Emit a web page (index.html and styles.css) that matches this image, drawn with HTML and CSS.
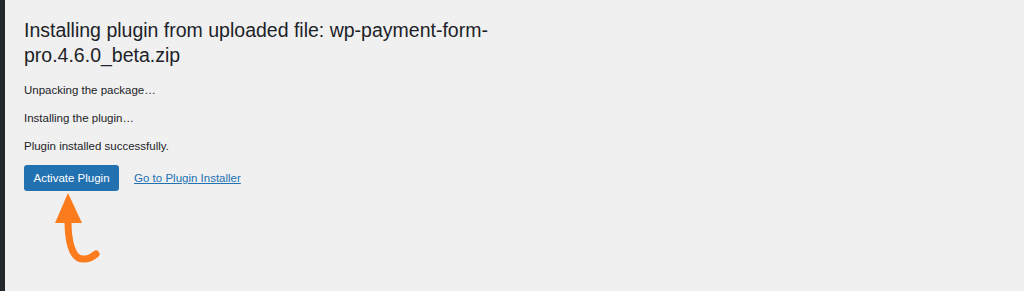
FILE: index.html
```html
<!DOCTYPE html>
<html lang="en">
<head>
<meta charset="utf-8">
<title>Installing Plugin</title>
<link rel="stylesheet" href="styles.css">
</head>
<body>
<div class="page">
  <div class="sidebar-edge"></div>
  <main class="wrap">
    <h1 class="title">Installing plugin from uploaded file: wp-payment-form-pro.4.6.0_beta.zip</h1>
    <p class="step">Unpacking the package…</p>
    <p class="step">Installing the plugin…</p>
    <p class="step">Plugin installed successfully.</p>
    <div class="actions">
      <a class="button-primary" href="#">Activate Plugin</a>
      <a class="link" href="#">Go to Plugin Installer</a>
    </div>
    <svg class="arrow" width="55" height="75" viewBox="0 0 55 75" aria-hidden="true">
      <polygon points="18,1 5,31 32,31" fill="#fc7b1c"/>
      <path d="M18 29 C18 46, 21 66, 32 67 C37 67.5, 42 65.5, 46 62" fill="none" stroke="#fc7b1c" stroke-width="7" stroke-linecap="round"/>
    </svg>
  </main>
</div>
</body>
</html>
```

FILE: styles.css
```css
html, body {
  margin: 0;
  padding: 0;
  background: #f0f0f1;
}
body {
  font-family: "Liberation Sans", Arial, sans-serif;
  color: #1d2327;
}
.page {
  display: flex;
  min-height: 291px;
}
.sidebar-edge {
  width: 5px;
  flex: none;
  background: #23282d;
}
.wrap {
  padding-left: 19px;
  padding-top: 17.5px;
  flex: 1;
}
.title {
  font-size: 19.5px;
  font-weight: 400;
  line-height: 25px;
  margin: 0;
  max-width: 500px;
}
.step {
  font-size: 11.5px;
  line-height: 16px;
  margin: 0 0 12px 0;
  color: #1d2327;
}
.title + .step {
  margin-top: 14.5px;
}
.actions {
  display: flex;
  align-items: center;
  gap: 15px;
  margin-top: -1px;
}
.button-primary {
  display: inline-block;
  background: #2271b1;
  color: #fff;
  font-size: 11.5px;
  line-height: 26px;
  height: 26px;
  padding: 0 9.5px;
  border-radius: 3px;
  text-decoration: none;
}
.link {
  color: #2271b1;
  font-size: 11.5px;
  text-decoration: underline;
}
.arrow {
  display: block;
  margin-left: 26px;
  margin-top: 1px;
}
```
